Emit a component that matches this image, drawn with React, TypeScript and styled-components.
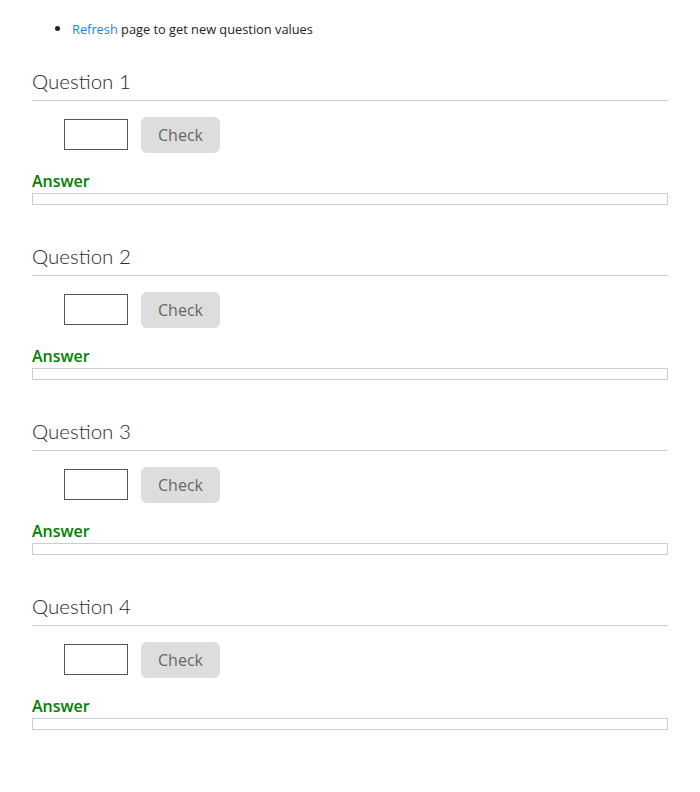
import React from "react";
import styled, { createGlobalStyle } from "styled-components";

const GlobalStyle = createGlobalStyle`
  body {
    margin: 0;
    background: #fff;
    font-family: "Open Sans", "Liberation Sans", sans-serif;
    color: #222;
  }
`;

const Page = styled.div`
  padding: 0 32px;
`;

const Notes = styled.ul`
  margin: 0;
  padding: 20px 0 0 40px;
  font-size: 12.8px;
  line-height: 18px;
  li::marker {
    font-size: 14px;
  }
`;

const Link = styled.a`
  color: #1a7fe6;
  text-decoration: none;
`;

const Section = styled.section`
  padding-top: 26px;
  padding-bottom: 8px;
`;

const Heading = styled.h2`
  margin: 0;
  height: 24px;
  padding: 5px 0 7px;
  font-family: Lato, "Liberation Sans", sans-serif;
  font-weight: 300;
  font-size: 20.5px;
  line-height: 24px;
  color: #2a2a2a;
  border-bottom: 1px solid #ccc;
`;

const Row = styled.div`
  display: flex;
  align-items: center;
  gap: 13px;
  margin: 16px 0 0 32px;
  height: 36px;
`;

const Field = styled.input`
  box-sizing: border-box;
  width: 64px;
  height: 31px;
  margin-bottom: 2px;
  border: 1px solid #555;
  padding: 0 4px;
  font-size: 14px;
`;

const CheckButton = styled.button`
  box-sizing: border-box;
  width: 79px;
  height: 36px;
  border: none;
  border-radius: 6px;
  background: #ddd;
  color: #666;
  font-family: "Open Sans", "Liberation Sans", sans-serif;
  font-size: 16px;
`;

const AnswerLabel = styled.div`
  margin-top: 17px;
  font-size: 16px;
  font-weight: 600;
  line-height: 22px;
  color: #008000;
`;

const AnswerBox = styled.div`
  margin-top: 1px;
  height: 10px;
  border: 1px solid #ccc;
`;

const questions = [1, 2, 3, 4];

const App: React.FC = () => {
  return (
    <Page>
      <GlobalStyle />
      <Notes>
        <li>
          <Link href="#">Refresh</Link> page to get new question values
        </li>
      </Notes>
      {questions.map((n) => (
        <Section key={n}>
          <Heading>Question {n}</Heading>
          <Row>
            <Field type="text" />
            <CheckButton>Check</CheckButton>
          </Row>
          <AnswerLabel>Answer</AnswerLabel>
          <AnswerBox />
        </Section>
      ))}
    </Page>
  );
};

export default App;
